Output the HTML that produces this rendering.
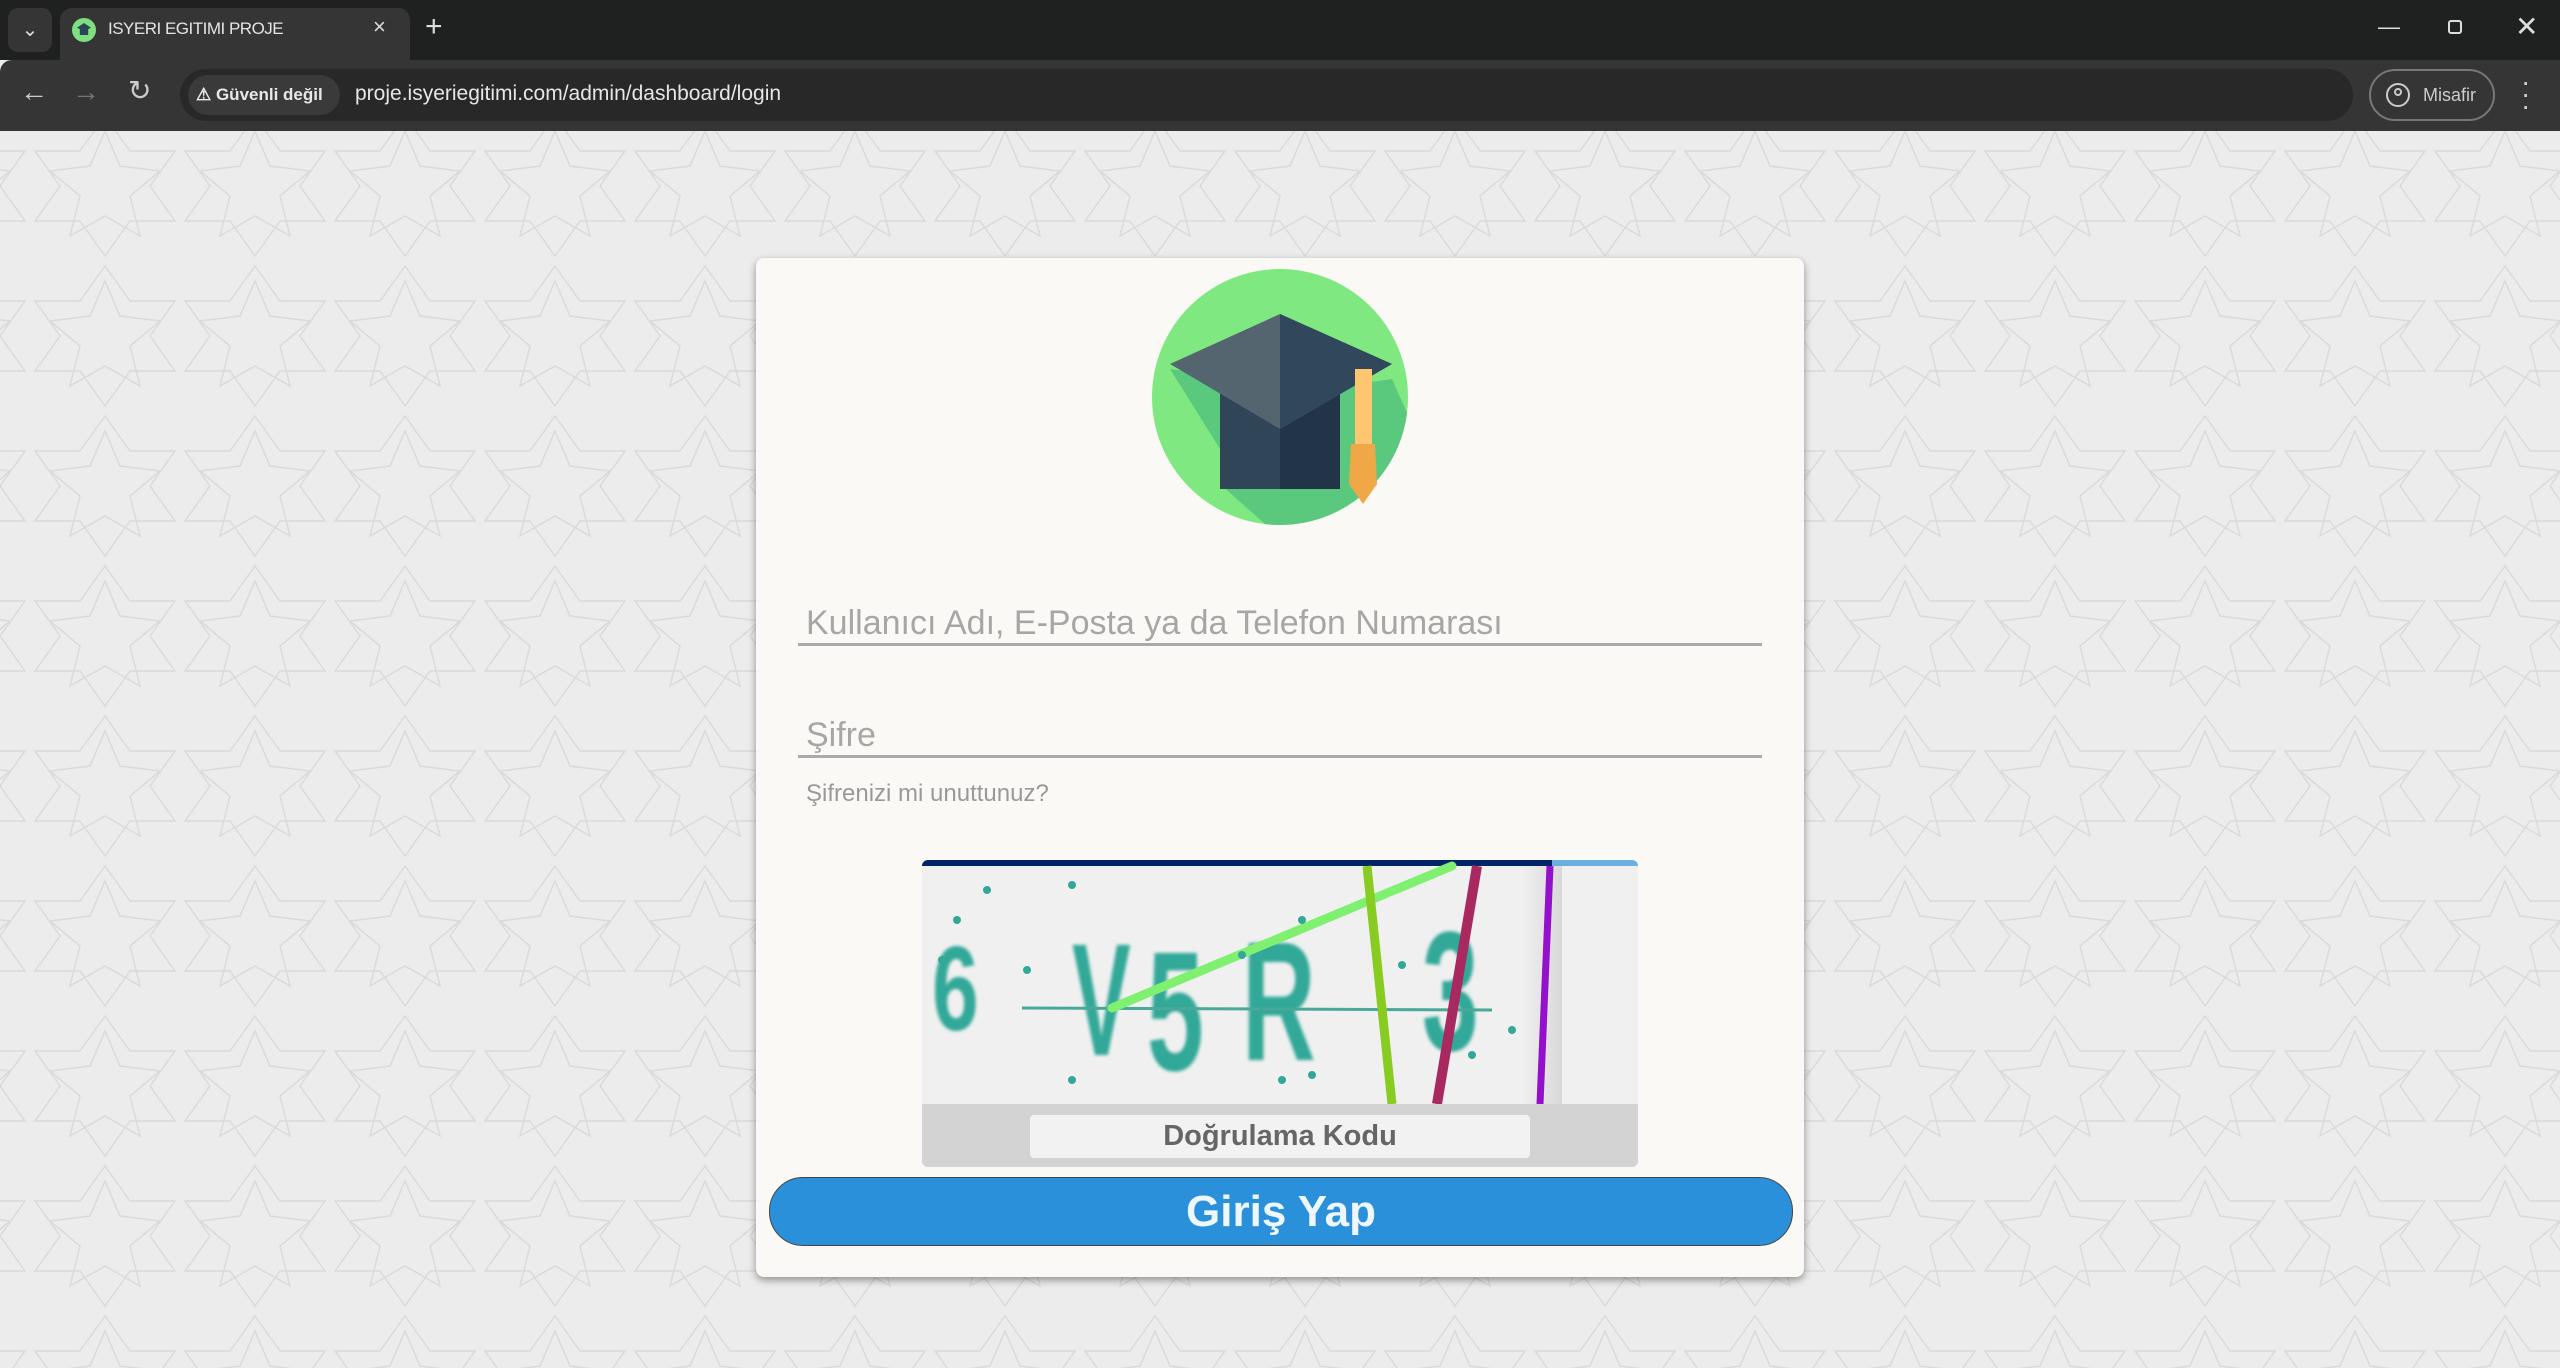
<!DOCTYPE html>
<html><head><meta charset="utf-8">
<style>
*{margin:0;padding:0;box-sizing:border-box}
html,body{width:2560px;height:1368px;overflow:hidden;font-family:"Liberation Sans",sans-serif}
body{background:#ececec;position:relative}
.tabbar{position:absolute;left:0;top:0;width:2560px;height:60px;background:#1f2020}
.toolbar{position:absolute;left:0;top:60px;width:2560px;height:71px;background:#353535;border-top-left-radius:12px}
.tab{position:absolute;left:60px;top:8px;width:350px;height:60px;background:#353535;border-radius:12px 12px 0 0}
.abs{position:absolute}
.pg{position:absolute;left:0;top:131px;width:2560px;height:1237px}
.card{position:absolute;left:756px;top:258px;width:1048px;height:1019px;background:#faf9f6;border-radius:8px;box-shadow:0 3px 8px rgba(0,0,0,.4)}
.inp{position:absolute;left:42px;width:964px;border-bottom:3px solid #aaa;color:#a6a6a6;font-size:34px;padding-left:8px}
</style></head><body>
<div class="pg"><svg width="2560" height="1237">
<defs><pattern id="p" width="150" height="150" patternUnits="userSpaceOnUse" x="30" y="-20">
<g fill="none" stroke="#dadada" stroke-width="1.5">
<polygon points="75,20 90,55 130,60 100,85 110,125 75,105 40,125 50,85 20,60 60,55"/>
<polygon points="75,5 100,40 145,40 120,75 145,110 100,110 75,145 50,110 5,110 30,75 5,40 50,40"/>
</g></pattern></defs>
<rect width="2560" height="1237" fill="url(#p)"/></svg></div>

<div class="tabbar"></div>
<div class="abs" style="left:8px;top:8px;width:44px;height:44px;background:#353535;border-radius:10px;color:#ddd;font-size:20px;text-align:center;line-height:44px">&#8964;</div>
<div class="tab"></div>
<div class="abs" style="left:72px;top:18px;width:24px;height:24px;border-radius:50%;background:#7fe07f"><div style="position:absolute;left:5px;top:5px;width:14px;height:12px;background:#2e4458;clip-path:polygon(50% 0,100% 40%,80% 50%,80% 100%,20% 100%,20% 50%,0 40%)"></div></div>
<div class="abs" style="left:108px;top:19px;color:#e4e4e4;font-size:17px;letter-spacing:-0.5px">ISYERI EGITIMI PROJE</div>
<div class="abs" style="left:373px;top:14px;color:#ddd;font-size:22px">×</div>
<div class="abs" style="left:425px;top:10px;color:#ddd;font-size:30px;font-weight:300">+</div>
<div class="abs" style="left:2378px;top:14px;color:#ddd;font-size:22px">—</div>
<div class="abs" style="left:2448px;top:20px;width:14px;height:14px;border:2px solid #ddd;border-radius:3px"></div>
<div class="abs" style="left:2515px;top:10px;color:#ddd;font-size:28px">✕</div>

<div class="toolbar"></div>
<div class="abs" style="left:20px;top:76px;color:#ccc;font-size:28px">&#8592;</div>
<div class="abs" style="left:72px;top:76px;color:#777;font-size:28px">&#8594;</div>
<div class="abs" style="left:128px;top:74px;color:#ccc;font-size:28px">&#8635;</div>
<div class="abs" style="left:180px;top:69px;width:2173px;height:52px;background:#282828;border-radius:26px"></div>
<div class="abs" style="left:188px;top:75px;width:152px;height:40px;background:#3a3a3a;border-radius:20px;color:#e8e8e8;font-size:17px;font-weight:bold;line-height:40px;padding-left:8px">&#9888; Güvenli değil</div>
<div class="abs" style="left:355px;top:82px;color:#e6e6e6;font-size:21px">proje.isyeriegitimi.com/admin/dashboard/login</div>
<div class="abs" style="left:2369px;top:69px;width:126px;height:52px;border:2px solid #777;border-radius:26px;color:#ccc;font-size:18px;line-height:48px;padding-left:52px">Misafir</div>
<div class="abs" style="left:2386px;top:83px;width:24px;height:24px;border:2px solid #ccc;border-radius:50%"><div style="position:absolute;left:6px;top:3px;width:8px;height:8px;border:2px solid #ccc;border-radius:50%"></div></div>
<div class="abs" style="left:2521px;top:76px;color:#ccc;font-size:28px;line-height:12px">·<br>·<br>·</div>

<div class="card">
<svg class="abs" style="left:396px;top:11px" width="256" height="256" viewBox="0 0 256 256">
<defs><clipPath id="c"><circle cx="128" cy="128" r="128"/></clipPath></defs>
<circle cx="128" cy="128" r="128" fill="#80e880"/>
<polygon clip-path="url(#c)" points="18,100 68,180 68,215 130,270 280,270 280,200 240,110 170,120" fill="#5ac97d"/>
<rect x="68" y="110" width="120" height="110" fill="#314559"/>
<rect x="128" y="110" width="60" height="110" fill="#223548"/>
<polygon points="18,95 128,45 240,95 128,160" fill="#546570"/>
<polygon points="128,45 240,95 128,160" fill="#31475b"/>
<rect x="203" y="100" width="17" height="75" fill="#fec670"/>
<polygon points="199,175 223,175 225,215 211,235 197,215" fill="#f0a847"/>
</svg>
<div class="inp" style="top:350px;height:38px;line-height:30px">Kullanıcı Adı, E-Posta ya da Telefon Numarası</div>
<div class="inp" style="top:462px;height:38px;line-height:30px">Şifre</div>
<div class="abs" style="left:50px;top:522px;color:#999;font-size:24px">Şifrenizi mi unuttunuz?</div>
<div class="abs" style="left:166px;top:602px;width:716px;height:307px;background:#d3d3d3;border-radius:6px;overflow:hidden">
<svg width="716" height="244" viewBox="0 0 716 244">
<defs><linearGradient id="sh" x1="0" x2="1"><stop offset="0" stop-color="#f0f0f0"/><stop offset="1" stop-color="#c8c8c8"/></linearGradient>
<filter id="bl"><feGaussianBlur stdDeviation="1.5"/></filter></defs>
<rect width="716" height="244" fill="#f0f0f0"/>
<rect x="600" y="0" width="40" height="244" fill="url(#sh)" opacity=".6"/>
<rect width="630" height="6" fill="#012466"/><rect x="630" width="86" height="6" fill="#6aafe0"/>
<g fill="#33a898" font-family="Liberation Sans" font-weight="bold" filter="url(#bl)">
<text x="0" y="170" font-size="120" transform="translate(10,0) scale(0.7,1)">6</text>
<text x="0" y="195" font-size="160" transform="translate(150,0) scale(0.55,1)">V</text>
<text x="0" y="210" font-size="170" transform="translate(225,0) scale(0.6,1)">5</text>
<text x="0" y="200" font-size="170" transform="translate(320,0) scale(0.6,1)">R</text>
<text x="0" y="190" font-size="170" transform="translate(500,0) scale(0.6,1)">3</text>
</g>
<line x1="100" y1="148" x2="570" y2="150" stroke="#4aa898" stroke-width="3"/>
<line x1="190" y1="148" x2="530" y2="6" stroke="#80f070" stroke-width="9" stroke-linecap="round"/>
<line x1="445" y1="6" x2="470" y2="244" stroke="#88cc22" stroke-width="9"/>
<line x1="555" y1="6" x2="515" y2="244" stroke="#a82860" stroke-width="10"/>
<line x1="628" y1="6" x2="618" y2="244" stroke="#9410cc" stroke-width="7"/>
<g fill="#33a898"><circle cx="35" cy="60" r="4"/><circle cx="65" cy="30" r="4"/><circle cx="105" cy="110" r="4"/><circle cx="150" cy="25" r="4"/><circle cx="320" cy="95" r="4"/><circle cx="380" cy="60" r="4"/><circle cx="360" cy="220" r="4"/><circle cx="150" cy="220" r="4"/><circle cx="390" cy="215" r="4"/><circle cx="550" cy="195" r="4"/><circle cx="590" cy="170" r="4"/><circle cx="480" cy="105" r="4"/><circle cx="20" cy="100" r="4"/></g>
</svg>
<div class="abs" style="left:108px;top:255px;width:500px;height:43px;background:#f2f2f2;border-radius:4px;color:#666;font-size:29px;font-weight:bold;text-align:center;line-height:43px">Doğrulama Kodu</div>
</div>
<div class="abs" style="left:13px;top:919px;width:1024px;height:69px;background:#2a90d9;border:1px solid #444;border-radius:34px;color:#eef6ff;font-size:44px;font-weight:bold;text-align:center;line-height:67px">Giriş Yap</div>
</div>
</body></html>
